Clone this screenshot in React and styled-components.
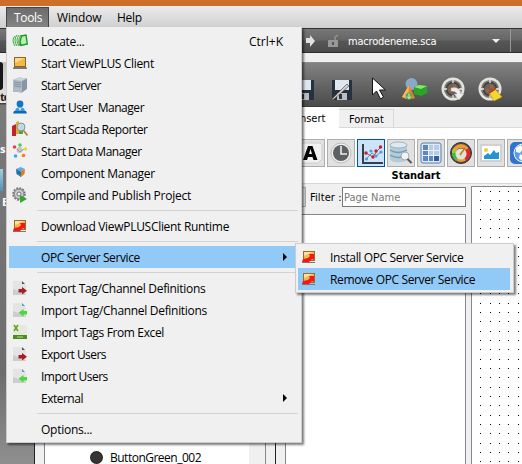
import React from "react";
import styled, { createGlobalStyle } from "styled-components";

const Global = createGlobalStyle`
  * { box-sizing: border-box; }
  body { margin: 0; overflow: hidden; }
`;

const condensed = `"DejaVu Sans Condensed", "DejaVu Sans", sans-serif`;

const Window = styled.div`
  position: relative;
  width: 522px;
  height: 464px;
  overflow: hidden;
  display: flex;
  flex-direction: column;
  background: #f0f0f0;
  color: #000;
  font: 12px/22px "Open Sans", "Noto Sans", sans-serif;
  white-space: pre;
`;
const TitleBar = styled.div`
  flex: 0 0 6px;
  background: #ce6e2b;
`;
const MenuBar = styled.div`
  flex: 0 0 22px;
  display: flex;
  padding: 1px 0 0 6px;
  background: linear-gradient(#ebebeb, #cfcfcf);
`;
const MenuTitle = styled.div`
  width: ${(p) => p.$w}px;
  height: 21px;
  line-height: ${(p) => (p.$open ? 20 : 22)}px;
  padding-left: ${(p) => (p.$open ? 7 : 8)}px;
  letter-spacing: ${(p) => p.$ls || 0}px;
  color: ${(p) => (p.$open ? "#fff" : "#000")};
  background: ${(p) => (p.$open ? "linear-gradient(#6c6c6c, #858585)" : "none")};
  border: ${(p) => (p.$open ? "1px solid #444" : "0")};
  border-bottom: 0;
`;
const AddressBar = styled.div`
  flex: 0 0 25px;
  min-height: 0;
  display: flex;
  align-items: center;
  padding-left: 305px;
  color: #fff;
  background: linear-gradient(#777, #666 48%, #575757 52%, #4b4b4b);
  border-top: 1px solid #333;
  border-bottom: 1px solid #2d2d2d;
`;
const PageFile = styled.div`
  width: 144px;
  margin-left: 10px;
  padding-top: 3px;
  letter-spacing: -0.2px;
  font: 11px/18px ${condensed};
`;
const AddressEnd = styled.div`
  width: 1px;
  height: 23px;
  margin-left: 9px;
  background: #999;
`;
const Workspace = styled.div`
  flex: 1;
  display: flex;
  min-height: 0;
`;
const SideStrip = styled.div`
  flex: 0 0 35px;
  display: flex;
  flex-direction: column;
  padding-top: 9px;
  border-right: 1px solid #222;
  background: linear-gradient(#f0f0f0 9px, #c4c4c4 9px, #e6e6e6 50px, #444 50px, #444 51px, #7a7a7a 52px, #6d6d6d 320px, #8f8f8f);
  color: #fff;
  font-weight: bold;
`;
const SideThumb = styled.div`
  width: 3px;
  height: 28px;
  border-radius: 0 4px 4px 0;
  background: #161616;
`;
const SideText = styled.div`
  height: 20px;
  line-height: 20px;
  margin-top: ${(p) => p.$mt}px;
  padding-left: ${(p) => p.$x || 0}px;
  font-size: 11px;
  letter-spacing: -1px;
  color: ${(p) => p.$c || "#fff"};
`;
const SideFolder = styled.div`
  width: 3px;
  height: 22px;
  margin-top: 10px;
  background: linear-gradient(#a6cde2, #5193b8);
`;
const Explorer = styled.div`
  flex: 0 0 241px;
  display: flex;
  align-items: flex-end;
  padding-left: 9px;
  border-right: 1px solid #222;
`;
const ExplorerList = styled.div`
  width: 222px;
  height: 100%;
  display: flex;
  align-items: flex-end;
  background: linear-gradient(90deg, #fff 204px, #f0f0f0 204px);
  border: solid #828790;
  border-width: 0 1px;
`;
const TreeRow = styled.div`
  height: 20px;
  display: flex;
  align-items: center;
  gap: 7px;
  margin-bottom: -4px;
  padding: 0 0 1px 45px;
  line-height: 16px;
  letter-spacing: -0.5px;
`;
const Bullet = styled.div`
  width: 13px;
  height: 13px;
  margin-top: -1px;
  border-radius: 50%;
  background: radial-gradient(#353535 55%, #222 60%);
`;
const Editor = styled.div`
  flex: 1;
  min-width: 0;
  display: flex;
  flex-direction: column;
  padding-top: 9px;
`;
const ToolStrip = styled.div`
  flex: 0 0 45px;
  display: flex;
  align-items: center;
  padding: 8px 0 0 16px;
  background: linear-gradient(#828282, #666 50%, #4b4b4b);
  border-top: 1px solid #8c8c8c;
  border-bottom: 1px solid #3c3c3c;
`;
const ToolSlot = styled.div`
  width: ${(p) => p.$w}px;
  height: 26px;
  flex: none;
`;
const Tabs = styled.div`
  flex: 0 0 21px;
  min-height: 0;
  display: flex;
  border-bottom: 1px solid #dadada;
`;
const Tab = styled.div`
  width: ${(p) => p.$w}px;
  height: ${(p) => (p.$active ? 21 : 18)}px;
  margin-top: ${(p) => (p.$active ? 0 : 2)}px;
  padding-left: ${(p) => p.$pad}px;
  font: 11px/${(p) => (p.$active ? 23 : 19)}px ${condensed};
  background: ${(p) => (p.$active ? "#fff" : "#f0f0f0")};
  border: solid #d9d9d9;
  border-width: ${(p) => (p.$active ? "0" : "1px 1px 0 0")};
`;
const Ribbon = styled.div`
  flex: 0 0 56px;
  min-height: 0;
  padding: 11px 0 0 21px;
  background: #fff;
  border-bottom: 1px solid #d5d5d5;
`;
const RibbonRow = styled.div`
  display: flex;
  gap: 2px;
`;
const RibbonButton = styled.div`
  flex: 0 0 28px;
  height: 28px;
  background: ${(p) => (p.$on ? "#cce4f7" : "#e1e1e1")};
  border: 1px solid ${(p) => (p.$on ? "#00549a" : "#adadad")};
  svg { display: block; }
`;
const GroupName = styled.div`
  width: 238px;
  text-align: center;
  font: bold 11px/18px ${condensed};
`;
const Panels = styled.div`
  flex: 1;
  display: flex;
  padding-top: 2px;
  min-height: 0;
`;
const PageColumn = styled.div`
  width: 190px;
  display: flex;
  flex-direction: column;
  padding-left: 9px;
`;
const FilterRow = styled.div`
  height: 22px;
  display: flex;
  align-items: center;
  font: 11px/19px ${condensed};
`;
const FilterButton = styled.div`
  width: 21px;
  height: 20px;
  margin-right: 4px;
  background: #e1e1e1;
  border: 1px solid #adadad;
`;
const FilterLabel = styled.div`
  width: 32px;
  letter-spacing: 0.1px;
`;
const FilterInput = styled.div`
  width: 124px;
  height: 20px;
  padding-left: 1px;
  color: #777;
  border: 1px solid #777;
  background: #fff;
`;
const PageList = styled.div`
  flex: 1;
  margin-top: 6px;
  background: #fff;
  border: 1px solid #828790;
  border-bottom: 0;
`;
const DesignCanvas = styled.div`
  flex: 1;
  margin-left: 5px;
  border: solid #828790;
  border-width: 1px 0 0 1px;
  background: #fff;
  svg { display: block; }
`;

const Menu = styled.div`
  position: absolute;
  left: ${(p) => p.$x}px;
  top: ${(p) => p.$y}px;
  width: ${(p) => p.$w}px;
  padding: 2px;
  background: #f0f0f0;
  border: 1px solid #ccc;
  border-top-color: ${(p) => (p.$sub ? "#ccc" : "#f0f0f0")};
  box-shadow: 2px 2px 2px rgba(0, 0, 0, 0.5);
`;
const MenuItem = styled.div`
  height: 22px;
  display: flex;
  align-items: center;
  padding-left: 3px;
  margin-right: ${(p) => p.$mr || 0}px;
  background: ${(p) => (p.$on ? "#91c9f7" : "transparent")};
`;
const MenuIcon = styled.div`
  width: 16px;
  height: 16px;
  flex: none;
  svg { display: block; }
`;
const MenuText = styled.div`
  flex: 1;
  padding: 2px 0 0 13px;
  letter-spacing: ${(p) => p.$ls || 0}px;
`;
const Shortcut = styled.div`
  margin-right: 16px;
  padding-top: 2px;
`;
const SubArrow = styled.div`
  margin-right: 12px;
  border: solid transparent;
  border-width: 4px 0 4px 4px;
  border-left-color: #000;
`;
const Separator = styled.div`
  height: 9px;
  margin: 0 1px 0 28px;
  padding-top: 4px;
  &::after { content: ""; display: block; height: 1px; background: #d2d2d2; }
`;

const I = ({ children, s = 16, v = 16 }) => (
  <svg width={s} height={s} viewBox={`0 0 ${v} ${v}`}>{children}</svg>
);
const doc = (arrow, fold, d) => (
  <I>
    <path d="M1 1h9l4 4v10H1z" fill="#e4e4e4" />
    <path d="M1 9L14 14v1H1z" fill="#cdcdcd" />
    <path d="M10 1l3 3h-3z" fill={fold} />
    <path d={d} fill={arrow} />
  </I>
);
const exportIcon = doc("#aa1c22", "#555", "M6.500 9H10V7l5 3.800-5 3.700v-2H6.500z");
const importIcon = doc("#4bd83f", "#4b9fc9", "M15 9h-3.500V7l-5 3.800 5 3.700v-2H15z");
const opcIcon = (
  <I>
    <path d="M2 2h12v10H2z" fill="#9c6b28" />
    <path d="M3 3h10v8H3z" fill="#f4b84c" />
    <path d="M3 3h9L3 7z" fill="#fbe0a0" />
    <path d="M1 13h13v1H1z" fill="#777" />
    <path d="M1 13l1-3 5-1 2-2-1-2h5v6l-2-1-3 3z" fill="#f51616" />
  </I>
);
const icons = {
  locate: (
    <I>
      <path d="M3 3Q-1 7 3 13M5 2Q1 7 5 13M7 2Q3 7 7 13M9 2Q5 7 8 13" fill="none" stroke="#36ab3b" />
      <path d="M9.500 3l4.500-1 1.300 9-6.300 1.500-1-4z" fill="#b9efb0" stroke="#139321" strokeWidth="1.3" />
    </I>
  ),
  client: (
    <I>
      <path d="M2 2h12v10H2z" fill="#8c642b" />
      <path d="M3 3h10v8H3z" fill="#f4b941" />
      <path d="M3 3h10L3 8z" fill="#fadb8a" />
      <path d="M1 13l1-1h12l1 1v1H1z" fill="#777" />
    </I>
  ),
  opc: opcIcon,
  server: (
    <I>
      <path d="M1 3l6-2.500 8 1v10.500l-5 3.500-9-1z" fill="#8796a4" />
      <path d="M1 3l9 1v11.500l-9-1z" fill="#aebac4" />
      <path d="M1 3l6-2.500 8 1L10 4z" fill="#ccd4da" />
      <path d="M2 5l7 1M2 7l7 1M2 9l7 1" stroke="#71808e" strokeWidth=".7" />
    </I>
  ),
  user: (
    <I>
      <path d="M3 13q0-4 3-4.500h4q3 .5 3 4.500z" fill="#3f9bdc" />
      <circle cx="8" cy="5" r="3.400" fill="#1676bd" />
      <path d="M6.500 9h3L8 12z" fill="#d7efff" />
      <path d="M1 14.500l1-2.500h12l1 2.500z" fill="#086abd" />
    </I>
  ),
  reporter: (
    <I>
      <path d="M0 5l4-2v12H0z" fill="#bd2824" />
      <path d="M4 1l3-1v13H4z" fill="#e9aa2d" />
      <path d="M7 8h4v5H7z" fill="#5b9d3c" />
      <circle cx="9" cy="6" r="4" fill="#b8dce5" stroke="#879397" />
      <path d="M11.500 9.500l4 5" stroke="#b47b3a" strokeWidth="1.700" />
    </I>
  ),
  data: (
    <I>
      <circle cx="7.500" cy="7" r="3" fill="#c4c4c4" />
      <path d="M5 6l3 3 4-3" stroke="#999" fill="none" />
      <circle cx="2.500" cy="4" r="1.800" fill="#ee3f47" />
      <circle cx="8" cy="2" r="1.800" fill="#40cf50" />
      <circle cx="13.500" cy="6" r="1.700" fill="#f7d22f" />
      <circle cx="3.500" cy="13" r="1.800" fill="#39a7ff" />
      <circle cx="11.500" cy="12.500" r="1.800" fill="#f57b2d" />
    </I>
  ),
  component: (
    <I>
      <path d="M4 4l4.500-2L13 4 9 6.500z" fill="#63a9dc" />
      <path d="M4 4l5 2.500V12L4.500 9z" fill="#1f6fb5" />
      <path d="M13 4L9 6.500V12l3.500-3z" fill="#e47923" />
      <path d="M5 8.500l4 1.500v2z" fill="#4b9e43" />
    </I>
  ),
  compile: (
    <I>
      <circle cx="7" cy="7" r="5.800" fill="#bababa" stroke="#777" strokeWidth="2" strokeDasharray="1.800 1.200" />
      <circle cx="7" cy="7" r="4.800" fill="#c9c9c9" stroke="#888" />
      <circle cx="7" cy="7" r="2" fill="#eee" stroke="#777" />
      <path d="M8 8l7 4-7 4z" fill="#36a52c" />
    </I>
  ),
  exp: exportIcon,
  imp: importIcon,
  excel: (
    <I>
      <path d="M1 1h14v13H1z" fill="#e6e9df" />
      <path d="M1 11h14v4H1z" fill="#4b8d19" />
      <path d="M2 1l4 6M6 1L2 7" stroke="#61a51c" strokeWidth="1.500" />
      <path d="M5 13h6" stroke="#b5d69b" />
    </I>
  ),
};

const items = [
  ["Locate...", "locate", -0.33],
  ["Start ViewPLUS Client", "client", -0.34],
  ["Start Server", "server", -0.48],
  ["Start User  Manager", "user", -0.46],
  ["Start Scada Reporter", "reporter", -0.45],
  ["Start Data Manager", "data", -0.45],
  ["Component Manager", "component", -0.3],
  ["Compile and Publish Project", "compile", -0.26],
  null,
  ["Download ViewPLUSClient Runtime", "opc", -0.3],
  null,
  ["OPC Server Service", "", -0.39],
  null,
  ["Export Tag/Channel Definitions", "exp", -0.31],
  ["Import Tag/Channel Definitions", "imp", -0.31],
  ["Import Tags From Excel", "excel", -0.36],
  ["Export Users", "exp", -0.56],
  ["Import Users", "imp", -0.53],
  ["External", "", -0.5],
  null,
  ["Options...", "", -0.25],
];

const floppy = (
  <g>
    <path d="M2 4h20v20H2z" fill="#26303f" />
    <path d="M5 4h14v10H5z" fill="#dfe7ee" />
    <path d="M7 17h10v7H7z" fill="#b9bdc1" />
    <path d="M9 18h3v5H9z" fill="#30343a" />
  </g>
);
const wheel = (
  <g>
    <circle cx="13" cy="13" r="10.300" fill="#777" stroke="#e4e3dc" strokeWidth="2.400" />
    <circle cx="13" cy="13" r="6.500" fill="#6b625b" stroke="#423f3c" strokeWidth="1.500" />
    <path d="M13 4v3M13 19v3M4 13h3M19 13h3" stroke="#eee" strokeWidth="1.300" />
    <path d="M8 14l3-2 2 3-3 2zM13 8l3 1 1 4-4-1z" fill="#9d653c" />
  </g>
);
const ribbonIcons = [
  <I s={26} v={26}>
    <path d="M1 3h21l2 2v14l-4 4H1z" fill="#f1f1f1" stroke="#ccc" />
    <path d="M5 20l5-14h4.500l5 14h-4l-1-3h-4.500l-1 3zM11 14h3l-1.500-5z" fill="#050505" fillRule="evenodd" />
  </I>,
  <I s={26} v={26}>
    <circle cx="13" cy="13" r="10" fill="#efefef" stroke="#bbb" />
    <circle cx="13" cy="13" r="8" fill="#5e6164" />
    <path d="M13 6v8h6" fill="none" stroke="#eee" strokeWidth="1.600" />
  </I>,
  <I s={26} v={26}>
    <path d="M5 4v19h20" fill="none" stroke="#373d4a" strokeWidth="2" />
    <path d="M8 19l6-6 4 3 5-4" fill="none" stroke="#4b9fd0" />
    <path d="M8 13l7 4 4-6 4-4" fill="none" stroke="#bd4a59" />
    <g fill="#c61d32"><circle cx="8" cy="13" r="1.700" /><circle cx="15" cy="17" r="1.700" /><circle cx="18" cy="11" r="1.700" /><circle cx="22.500" cy="7" r="1.700" /></g>
    <g fill="#4b9fd0"><circle cx="8.500" cy="19" r="1.600" /><circle cx="13" cy="11" r="1.600" /><circle cx="18" cy="16" r="1.600" /><circle cx="23" cy="12" r="1.600" /></g>
  </I>,
  <I s={26} v={26}>
    <path d="M2 5v15q8 5 17 0V5z" fill="#b5cbd8" />
    <ellipse cx="10.500" cy="5" rx="8.500" ry="3" fill="#dfe9ef" stroke="#9eb5c3" />
    <path d="M2 10q8 5 17 0M2 15q8 5 17 0" fill="none" stroke="#6f9db7" strokeWidth="1.400" />
    <circle cx="17" cy="16" r="4" fill="#eef4f7" stroke="#aaa" />
    <path d="M19.500 19l4 4" stroke="#555" strokeWidth="2" />
  </I>,
  <I s={26} v={26}>
    <rect x="3" y="3" width="20" height="20" rx="2" fill="#dce9f6" stroke="#5b7ea9" />
    <path d="M5 5h16v16H5z" fill="#b5cbe8" />
    <path d="M5 5h5v16H5zM11 16h5v5h-5z" fill="#5b86c0" />
    <path d="M16 16h5v5h-5z" fill="#315f9e" />
    <path d="M5 10.500h16M5 15.500h16M10.500 5v16M15.500 5v16" stroke="#eaf2fa" />
  </I>,
  <I s={26} v={26}>
    <circle cx="13" cy="13" r="10.500" fill="#4c4c4c" stroke="#353535" />
    <circle cx="13" cy="13" r="7" fill="none" stroke="#f39a32" strokeWidth="4" />
    <path d="M6 13a7 7 0 0 0 3 6" fill="none" stroke="#4bb44c" strokeWidth="4" />
    <path d="M6 13a7 7 0 0 1 1-4" fill="none" stroke="#a5c93c" strokeWidth="4" />
    <path d="M19 9a7 7 0 0 1-2 10" fill="none" stroke="#de2929" strokeWidth="4" />
    <circle cx="13" cy="14" r="5.500" fill="#e3e4d4" />
    <path d="M12 15l5-7" stroke="#b0802c" strokeWidth="1.500" />
  </I>,
  <I s={26} v={26}>
    <path d="M2 4h22v18H2z" fill="#d1d1d1" />
    <path d="M4 6h18v14H4z" fill="#fff" />
    <circle cx="8" cy="10" r="2" fill="#f8cb31" />
    <path d="M6 19v-3l4-3 2 2 4-5 2 3 3-1v7z" fill="#2294d1" />
  </I>,
  <I s={26} v={26}>
    <rect x="2" y="2" width="24" height="22" rx="5" fill="#3075cd" />
    <circle cx="15" cy="13" r="9" fill="#5d9be5" stroke="#fff" />
    <path d="M8 8l5-3 2 4-3 4-4-1zM12 14l4 2-2 5-3-3z" fill="#fff" />
  </I>,
];

const dots = [];
for (let r = 0; r < 30; r++)
  for (let c = 0; c < 5; c++)
    dots.push(`M${Math.floor(8.7 + (c * 28) / 3)} ${Math.floor(4.05 + (r * 28) / 3)}h1v1h-1z`);

export default function App() {
  return (
    <Window>
      <Global />
      <TitleBar />
      <MenuBar>
        <MenuTitle $open $w={43} $ls={-0.35}>Tools</MenuTitle>
        <MenuTitle $w={60} $ls={-0.15}>Window</MenuTitle>
        <MenuTitle $w={50} $ls={-0.3}>Help</MenuTitle>
      </MenuBar>
      <AddressBar>
        <svg width="33" height="20" viewBox="0 0 33 20">
          <path d="M1 7h4V4l5 6-5 6v-4H1z" fill="#e1e1e1" />
          <path d="M23 9h10v7H23z" fill="#989898" />
          <path d="M30 9V6l3-2" stroke="#989898" strokeWidth="1.300" fill="none" />
          <path d="M27 11h2v3h-2z" fill="#555" />
        </svg>
        <PageFile>macrodeneme.sca</PageFile>
        <svg width="9" height="6"><path d="M0 1h8L4 5z" fill="#eee" /></svg>
        <AddressEnd />
      </AddressBar>
      <Workspace>
        <SideStrip>
          <SideThumb />
          <SideText $mt={-3} $c="#222">te</SideText>
          <SideText $mt={32}>s</SideText>
          <SideFolder />
          <SideText $mt={1} $x={2}>E</SideText>
        </SideStrip>
        <Explorer>
          <ExplorerList>
            <TreeRow><Bullet />ButtonGreen_002</TreeRow>
          </ExplorerList>
        </Explorer>
        <Editor>
          <ToolStrip>
            <ToolSlot $w={38}><I s={26} v={26}>{floppy}</I></ToolSlot>
            <ToolSlot $w={41}>
              <I s={26} v={26}>{floppy}<path d="M1 24L17 8l2 2L4 23z" fill="#d0d0d0" stroke="#555" strokeWidth=".7" /></I>
            </ToolSlot>
            <ToolSlot $w={31}>
              <I s={26} v={26}><path d="M1.500 2v17l4-4 4 8 3-2-4-7h6z" fill="#fff" stroke="#111" /></I>
            </ToolSlot>
            <ToolSlot $w={38}>
              <I s={26} v={26}>
                <circle cx="9.500" cy="8" r="6" fill="#88a9c9" />
                <path d="M7 9l6 13q-7 3-13-1z" fill="#ef8522" />
                <path d="M7 9L0 21l6 2z" fill="#f9ba61" />
                <path d="M12 11l5-2 8 1v7l-6 3-7-2z" fill="#29a52b" />
                <path d="M12 11l5-2 8 1-6 3z" fill="#8ee36e" />
                <circle cx="7" cy="20" r="3.500" fill="#5bab4c" />
                <path d="M7 17.500v5M5 20.500l2 2 2-2" stroke="#dff2c8" fill="none" />
              </I>
            </ToolSlot>
            <ToolSlot $w={37}>
              <I s={26} v={26}>{wheel}<path d="M11 12q9-2 10 6h3l-5 6-5-6h3q-1-3-6-3z" fill="#eee" stroke="#aaa" strokeWidth=".5" /></I>
            </ToolSlot>
            <ToolSlot $w={28}>
              <I s={26} v={26}>{wheel}<path d="M12 17l6-4 7 8-8 4z" fill="#f5d72b" stroke="#bd941b" strokeWidth=".6" /><path d="M12 17l6-4" stroke="#cf3425" strokeWidth="2" /></I>
            </ToolSlot>
          </ToolStrip>
          <Tabs>
            <Tab $active $w={63} $pad={21}>Insert</Tab>
            <Tab $w={55} $pad={10}>Format</Tab>
          </Tabs>
          <Ribbon>
            <RibbonRow>
              {ribbonIcons.map((ic, i) => <RibbonButton key={i} $on={i === 2}>{ic}</RibbonButton>)}
            </RibbonRow>
            <GroupName>Standart</GroupName>
          </Ribbon>
          <Panels>
            <PageColumn>
              <FilterRow>
                <FilterButton />
                <FilterLabel>Filter :</FilterLabel>
                <FilterInput>Page Name</FilterInput>
              </FilterRow>
              <PageList />
            </PageColumn>
            <DesignCanvas>
              <svg width="50" height="277"><path d={dots.join("")} fill="#000" /></svg>
            </DesignCanvas>
          </Panels>
        </Editor>
      </Workspace>

      <Menu $x={6} $y={27} $w={296}>
        {items.map((it, i) =>
          it ? (
            <MenuItem key={i} $on={it[0] === "OPC Server Service"}>
              <MenuIcon>{icons[it[1]]}</MenuIcon>
              <MenuText $ls={it[2]}>{it[0]}</MenuText>
              {i === 0 && <Shortcut>Ctrl+K</Shortcut>}
              {!it[1] && it[0] !== "Options..." && <SubArrow />}
            </MenuItem>
          ) : (
            <Separator key={i} />
          )
        )}
      </Menu>
      <Menu $sub $x={295} $y={243} $w={219}>
        <MenuItem $mr={1}><MenuIcon>{opcIcon}</MenuIcon><MenuText $ls={-0.35}>Install OPC Server Service</MenuText></MenuItem>
        <MenuItem $mr={1} $on><MenuIcon>{opcIcon}</MenuIcon><MenuText $ls={-0.37}>Remove OPC Server Service</MenuText></MenuItem>
      </Menu>
    </Window>
  );
}
